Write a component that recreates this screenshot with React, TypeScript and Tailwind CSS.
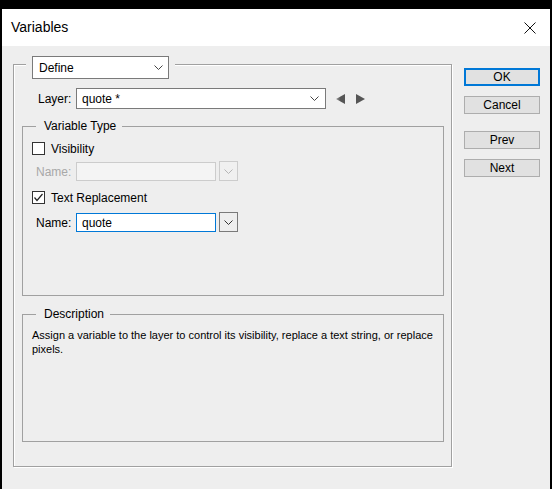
import React from "react";

function Chevron({ color = "#333" }: { color?: string }) {
  return (
    <svg width="9" height="5" viewBox="0 0 9 5" className="block">
      <path d="M0.5 0.5 L4.5 4.5 L8.5 0.5" fill="none" stroke={color} strokeWidth="1" />
    </svg>
  );
}

function Checkbox({ checked }: { checked?: boolean }) {
  return (
    <div className="w-[13px] h-[13px] border border-[#333333] bg-white flex items-center justify-center">
      {checked && (
        <svg width="11" height="11" viewBox="0 0 11 11" className="block">
          <path d="M1.5 5.5 L4 8.5 L9.5 2" fill="none" stroke="#222" strokeWidth="1.2" />
        </svg>
      )}
    </div>
  );
}

function Btn({ label, primary }: { label: string; primary?: boolean }) {
  return (
    <div
      className={
        "w-[76px] h-[18px] flex items-center justify-center text-[12px] leading-none bg-[#e1e1e1] " +
        (primary ? "border-2 border-[#0078d7]" : "border border-[#adadad]")
      }
    >
      {label}
    </div>
  );
}

export default function App() {
  return (
    <div className="w-[552px] h-[489px] bg-black pl-[2px] pt-[9px] font-['Liberation_Sans',Arial,sans-serif] text-black">
      <div className="w-[548px] h-[480px] flex flex-col">
        {/* Title bar */}
        <div className="h-[37px] bg-white flex items-center justify-between pl-[9px] pr-[14px]">
          <span className="text-[14px]">Variables</span>
          <svg width="12" height="12" viewBox="0 0 12 12" className="block">
            <path d="M0.5 0.5 L11.5 11.5 M11.5 0.5 L0.5 11.5" stroke="#111" strokeWidth="1" />
          </svg>
        </div>

        {/* Body */}
        <div className="flex-1 bg-[#eeeeee] flex pl-[11px] pt-[18px]">
          {/* Outer group */}
          <div className="relative w-[439px] h-[403px] border border-[#a0a0a0] shadow-[inset_1px_1px_0_#ffffff,1px_1px_0_#ffffff] pl-[8px] pt-[23px]">
            <div className="absolute left-[12px] top-[-9px] px-[6px] bg-[#eeeeee]">
              <div className="w-[137px] h-[23px] bg-white border border-[#7a7a7a] flex items-center justify-between pl-[6px] pr-[5px] text-[12px]">
                <span>Define</span>
                <Chevron color="#444" />
              </div>
            </div>

            {/* Layer row */}
            <div className="flex items-center h-[21px] text-[12px]">
              <div className="w-[54px] pl-[16px]">Layer:</div>
              <div className="w-[250px] h-[21px] bg-white border border-[#7a7a7a] flex items-center justify-between pl-[5px] pr-[6px]">
                <span>quote *</span>
                <Chevron color="#444" />
              </div>
              <svg width="9" height="10" viewBox="0 0 9 10" className="block ml-[10px]">
                <defs>
                  <linearGradient id="lg" x1="0" x2="1" y1="0" y2="0">
                    <stop offset="0" stopColor="#9a9a9a" />
                    <stop offset="0.5" stopColor="#555555" />
                  </linearGradient>
                </defs>
                <path d="M0 5 L9 0 L9 10 Z" fill="url(#lg)" />
              </svg>
              <svg width="9" height="10" viewBox="0 0 9 10" className="block ml-[11px]">
                <path d="M0 0 L9 5 L0 10 Z" fill="#555555" />
              </svg>
            </div>

            {/* Variable Type group */}
            <div className="relative mt-[17px] w-[422px] h-[170px] border border-[#a0a0a0] pl-[9px] pt-[15px] text-[12px]">
              <div className="absolute left-[13px] top-[-8px] pl-[8px] pr-[6px] bg-[#eeeeee] leading-[14px]">
                Variable Type
              </div>
              <div className="flex items-center h-[13px]">
                <Checkbox />
                <span className="ml-[6px]">Visibility</span>
              </div>
              <div className="flex items-center h-[19px] mt-[7px] -ml-[9px]">
                <div className="w-[53px] pl-[13px] text-[#a8a8a8]">Name:</div>
                <div className="w-[140px] h-[19px] bg-[#f4f4f4] border border-[#cccccc]" />
                <div className="ml-[3px] w-[19px] h-[20px] -mt-[1px] border border-[#cccccc] bg-[#f0f0f0] flex items-center justify-center">
                  <Chevron color="#b5b5b5" />
                </div>
              </div>
              <div className="flex items-center h-[13px] mt-[10px]">
                <Checkbox checked />
                <span className="ml-[6px]">Text Replacement</span>
              </div>
              <div className="flex items-center h-[19px] mt-[9px] -ml-[9px]">
                <div className="w-[53px] pl-[13px]">Name:</div>
                <div className="w-[140px] h-[19px] bg-white border border-[#0078d7] flex items-center pl-[5px]">
                  quote
                </div>
                <div className="ml-[3px] w-[19px] h-[20px] -mt-[1px] border border-[#7a7a7a] bg-[#eeeeee] flex items-center justify-center">
                  <Chevron color="#333" />
                </div>
              </div>
            </div>

            {/* Description group */}
            <div className="relative mt-[18px] w-[422px] h-[128px] border border-[#a0a0a0] pl-[9px] pt-[13px]">
              <div className="absolute left-[13px] top-[-8px] pl-[8px] pr-[6px] bg-[#eeeeee] leading-[14px] text-[12px]">
                Description
              </div>
              <p className="w-[408px] text-[11px] leading-[14px]">
                Assign a variable to the layer to control its visibility, replace a text string, or replace pixels.
              </p>
            </div>
          </div>

          {/* Buttons */}
          <div className="ml-[12px] mt-[4px] flex flex-col">
            <Btn label="OK" primary />
            <div className="mt-[10px]">
              <Btn label="Cancel" />
            </div>
            <div className="mt-[17px]">
              <Btn label="Prev" />
            </div>
            <div className="mt-[10px]">
              <Btn label="Next" />
            </div>
          </div>
        </div>
      </div>
    </div>
  );
}
